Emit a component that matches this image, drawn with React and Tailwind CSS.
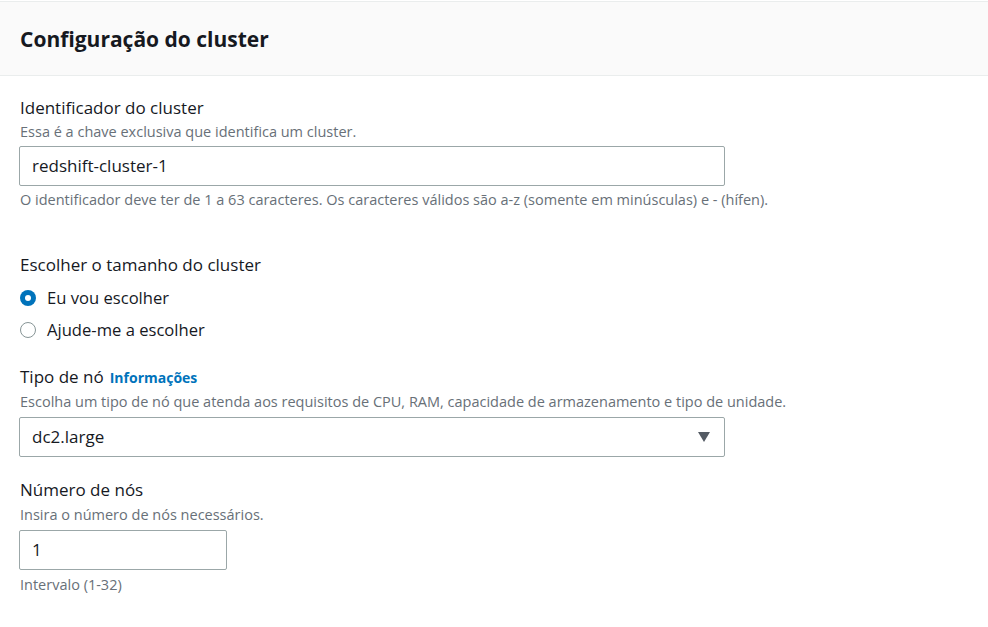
import React from 'react';

const font = { fontFamily: '"Open Sans", "Liberation Sans", sans-serif' };

function Radio({ checked, label }) {
  return (
    <div className="flex items-center h-8">
      {checked ? (
        <span className="w-4 h-4 rounded-full bg-[#0073bb] flex items-center justify-center">
          <span className="w-[6px] h-[6px] rounded-full bg-white" />
        </span>
      ) : (
        <span className="w-4 h-4 rounded-full border-[1.5px] border-[#879596] bg-white" />
      )}
      <span className="ml-[11px] text-[16.6px] text-[#16191f]">{label}</span>
    </div>
  );
}

export default function App() {
  return (
    <div className="w-[988px] h-[627px] bg-white overflow-hidden" style={font}>
      <div className="mt-[1px] border-t border-b border-[#eaeded] bg-[#fafafa] h-[75px] flex items-center px-5">
        <h2 className="text-[21px] font-bold text-[#16191f] leading-6">Configuração do cluster</h2>
      </div>

      <div className="px-5">
        <div className="pt-[21px] text-[17px] leading-[22px] text-[#16191f]">Identificador do cluster</div>
        <div className="mt-[3px] text-[14.5px] leading-5 text-[#687078]">Essa é a chave exclusiva que identifica um cluster.</div>
        <div className="mt-[4px] w-[706px] h-10 -ml-px border border-[#9ba7a8] rounded-[2px] flex items-center px-3 text-[17px] text-[#16191f]">
          redshift-cluster-1
        </div>
        <div className="mt-[5px] text-[14.5px] leading-[18px] text-[#687078]">
          O identificador deve ter de 1 a 63 caracteres. Os caracteres válidos são a-z (somente em minúsculas) e - (hífen).
        </div>

        <div className="mt-[45px] text-[17px] leading-[22px] text-[#16191f]">Escolher o tamanho do cluster</div>

        <div className="mt-[6px]">
          <Radio checked label="Eu vou escolher" />
          <Radio label="Ajude-me a escolher" />
        </div>

        <div className="mt-[20px] text-[17px] leading-[22px] text-[#16191f] flex items-baseline">
          Tipo de nó
          <a className="ml-[6px] text-[14px] font-bold text-[#0073bb]">Informações</a>
        </div>
        <div className="mt-[3px] text-[14.5px] leading-5 text-[#687078]">
          Escolha um tipo de nó que atenda aos requisitos de CPU, RAM, capacidade de armazenamento e tipo de unidade.
        </div>
        <div className="mt-[5px] w-[706px] h-10 -ml-px border border-[#9ba7a8] rounded-[2px] flex items-center justify-between px-3 text-[17px] text-[#16191f]">
          <span>dc2.large</span>
          <svg width="12" height="10" viewBox="0 0 12 10" className="mr-[2px]">
            <path d="M0 0 H12 L6 10 Z" fill="#545b64" />
          </svg>
        </div>

        <div className="mt-[22px] text-[17px] leading-[22px] text-[#16191f]">Número de nós</div>
        <div className="mt-[4px] text-[14.5px] leading-5 text-[#687078]">Insira o número de nós necessários.</div>
        <div className="mt-[5px] w-[208px] h-10 -ml-px border border-[#9ba7a8] rounded-[2px] flex items-center px-3 text-[17px] text-[#16191f]">
          1
        </div>
        <div className="mt-[6px] text-[14.5px] leading-[18px] text-[#687078]">Intervalo (1-32)</div>
      </div>
    </div>
  );
}
